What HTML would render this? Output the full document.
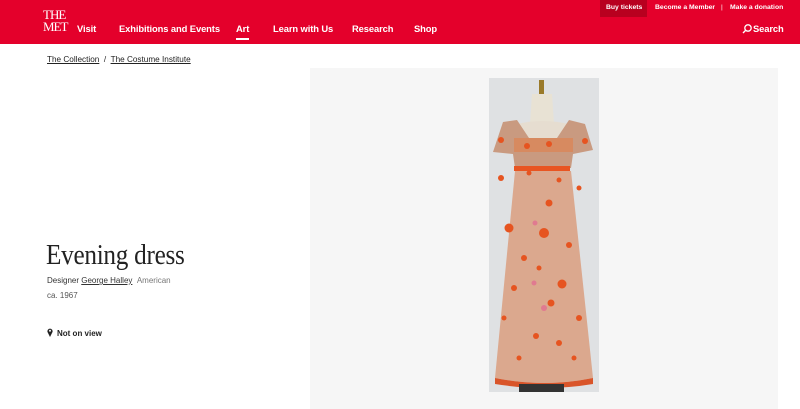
<!DOCTYPE html>
<html><head><meta charset="utf-8"><style>
*{margin:0;padding:0;box-sizing:border-box}
body{width:800px;height:409px;overflow:hidden;background:#fff;font-family:"Liberation Sans",sans-serif;position:relative}
.hdr{position:absolute;left:0;top:0;width:800px;height:44px;background:#e4002b;color:#fff}
.logo{position:absolute;left:43px;top:9px;font-family:"Liberation Serif",serif;font-size:13px;line-height:12px;letter-spacing:-1px}
.nav{position:absolute;top:23px;font-size:9.4px;font-weight:bold;letter-spacing:-0.1px}
.top{position:absolute;top:4px;font-size:6.8px;font-weight:bold}
.crumb{position:absolute;top:55px;left:47px;font-size:8.2px;color:#222}
.crumb u{text-decoration:underline}
h1{position:absolute;left:46px;top:240px;font-family:"Liberation Serif",serif;font-weight:normal;font-size:28px;color:#222;letter-spacing:-0.3px;transform:scaleX(0.9);transform-origin:0 0;white-space:nowrap}
.t{position:absolute;font-size:8px;color:#333}
.panel{position:absolute;left:310px;top:68px;width:468px;height:341px;background:#f6f6f6}
</style></head><body>
<div class="hdr">
<div class="logo">THE<br>MET</div>
<div class="nav" style="left:77px">Visit</div>
<div class="nav" style="left:119px">Exhibitions and Events</div>
<div class="nav" style="left:236px">Art</div>
<div style="position:absolute;left:236px;top:38px;width:13px;height:1.5px;background:#fff"></div>
<div class="nav" style="left:273px">Learn with Us</div>
<div class="nav" style="left:352px">Research</div>
<div class="nav" style="left:414px">Shop</div>
<div style="position:absolute;left:600px;top:0;width:47px;height:17px;background:#b8001f"></div>
<div class="top" style="left:606px">Buy tickets</div>
<div class="top" style="left:655px">Become a Member</div>
<div class="top" style="left:721px;font-weight:normal">|</div>
<div class="top" style="left:730px">Make a donation</div>
<svg style="position:absolute;left:742px;top:24px" width="10" height="10" viewBox="0 0 10 10"><circle cx="6" cy="4" r="3.2" fill="none" stroke="#fff" stroke-width="1.3"/><path d="M3.6 6.4L1 9" stroke="#fff" stroke-width="1.4"/></svg>
<div class="nav" style="left:753px">Search</div>
</div>
<div class="crumb"><u>The Collection</u> &nbsp;/&nbsp; <u>The Costume Institute</u></div>
<h1>Evening dress</h1>
<div class="t" style="left:47px;top:276px">Designer <u>George Halley</u> &nbsp;<span style="color:#777">American</span></div>
<div class="t" style="left:47px;top:291px;color:#555">ca. 1967</div>
<svg style="position:absolute;left:47px;top:328px" width="6" height="9" viewBox="0 0 6 9"><path d="M3 9L0.5 4A2.6 2.6 0 1 1 5.5 4Z" fill="#222"/><circle cx="3" cy="2.8" r="1" fill="#fff"/></svg>
<div class="t" style="left:57px;top:329px;font-weight:bold;color:#222">Not on view</div>
<div class="panel"></div>
<svg style="position:absolute;left:489px;top:78px" width="110" height="314" viewBox="0 0 110 314">
<rect width="110" height="314" fill="#dfe1e3"/>
<rect x="50" y="2" width="5" height="14" fill="#9a7a2a"/>
<path d="M43 16h20l2 30H41z" fill="#e8e2d4"/>
<path d="M28 46Q53 40 80 46L80 90H28Z" fill="#e6ddd0"/>
<path d="M14 44L28 42L40 60L68 60L80 42L96 46L104 72L84 76L82 90L26 90L24 76L4 74Z" fill="#c99a80"/>
<path d="M25 60H84V74H25Z" fill="#d78a60"/>
<rect x="25" y="88" width="56" height="5" fill="#e85522"/>
<path d="M26 93H82L104 300Q56 310 6 300Z" fill="#dba88e"/>
<path d="M6 300Q56 310 104 300L104 306Q56 314 6 306Z" fill="#d9552a"/>
<rect x="30" y="306" width="45" height="8" fill="#333"/>
<g fill="#e65420">
<circle cx="20" cy="150" r="4.5"/><circle cx="55" cy="155" r="5"/><circle cx="80" cy="167" r="3"/><circle cx="60" cy="125" r="3.5"/><circle cx="40" cy="95" r="2.5"/><circle cx="70" cy="102" r="2.5"/><circle cx="35" cy="180" r="3"/><circle cx="73" cy="206" r="4.5"/><circle cx="62" cy="225" r="3.5"/><circle cx="25" cy="210" r="3"/><circle cx="90" cy="240" r="3"/><circle cx="47" cy="258" r="3"/><circle cx="70" cy="265" r="3"/><circle cx="15" cy="240" r="2.5"/><circle cx="85" cy="280" r="2.5"/><circle cx="30" cy="280" r="2.5"/><circle cx="12" cy="100" r="3"/><circle cx="96" cy="63" r="3"/><circle cx="12" cy="62" r="3"/><circle cx="60" cy="66" r="3"/><circle cx="38" cy="68" r="3"/><circle cx="90" cy="110" r="2.5"/><circle cx="50" cy="190" r="2.5"/>
</g>
<g fill="#e07a90"><circle cx="46" cy="145" r="2.5"/><circle cx="55" cy="230" r="3"/><circle cx="45" cy="205" r="2.5"/></g>
</svg>
</body></html>
